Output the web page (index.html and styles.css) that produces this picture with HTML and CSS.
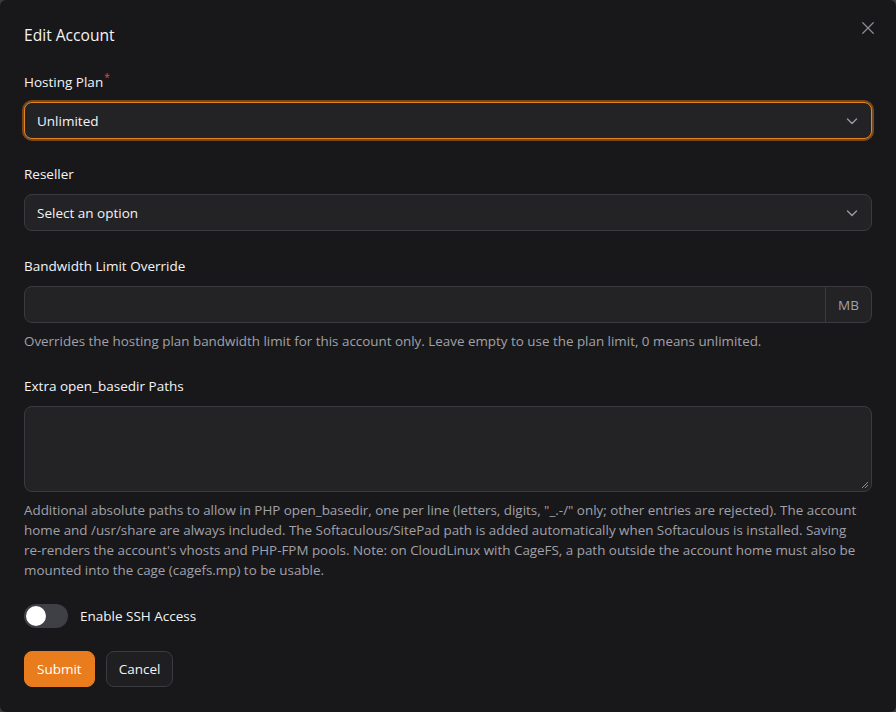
FILE: index.html
```html
<!DOCTYPE html>
<html lang="en">
<head>
<meta charset="utf-8">
<title>Edit Account</title>
<link rel="stylesheet" href="styles.css">
</head>
<body>
<div class="modal">
  <div class="header">
    <h2 class="title">Edit Account</h2>
    <button class="close" aria-label="Close">
      <svg width="18" height="18" viewBox="0 0 24 24" fill="none" stroke="currentColor" stroke-width="1.7" stroke-linecap="round"><path d="M5 5l14 14M19 5L5 19"/></svg>
    </button>
  </div>
  <form class="form">
    <div class="field">
      <label class="label">Hosting Plan<sup class="req">*</sup></label>
      <div class="select focused">
        <span>Unlimited</span>
        <svg class="chev" width="20" height="20" viewBox="0 0 20 20" fill="none" stroke="currentColor" stroke-width="1.4" stroke-linecap="round" stroke-linejoin="round"><path d="M5.5 8l4.5 4.5 4.5-4.5"/></svg>
      </div>
    </div>
    <div class="field">
      <label class="label">Reseller</label>
      <div class="select">
        <span>Select an option</span>
        <svg class="chev" width="20" height="20" viewBox="0 0 20 20" fill="none" stroke="currentColor" stroke-width="1.4" stroke-linecap="round" stroke-linejoin="round"><path d="M5.5 8l4.5 4.5 4.5-4.5"/></svg>
      </div>
    </div>
    <div class="field">
      <label class="label">Bandwidth Limit Override</label>
      <div class="input-group">
        <div class="input"></div>
        <div class="addon">MB</div>
      </div>
      <p class="help">Overrides the hosting plan bandwidth limit for this account only. Leave empty to use the plan limit, 0 means unlimited.</p>
    </div>
    <div class="field">
      <label class="label">Extra open_basedir Paths</label>
      <div class="textarea">
        <svg class="grip" width="9" height="9" viewBox="0 0 9 9" stroke="#8a8a90" stroke-width="1"><path d="M8 2L2 8M8 5L5 8"/></svg>
      </div>
      <p class="help">Additional absolute paths to allow in PHP open_basedir, one per line (letters, digits, "_.-/" only; other entries are rejected). The account home and /usr/share are always included. The Softaculous/SitePad path is added automatically when Softaculous is installed. Saving <span class="nowrap">re-renders</span> the account's vhosts and PHP-FPM pools. Note: on CloudLinux with CageFS, a path outside the account home must also be mounted into the cage (cagefs.mp) to be usable.</p>
    </div>
    <div class="toggle-row">
      <span class="toggle"><span class="knob"></span></span>
      <span class="toggle-label">Enable SSH Access</span>
    </div>
    <div class="actions">
      <button type="button" class="btn primary">Submit</button>
      <button type="button" class="btn secondary">Cancel</button>
    </div>
  </form>
</div>
</body>
</html>
```

FILE: styles.css
```css
* { box-sizing: border-box; }
html, body { margin: 0; padding: 0; }
body {
  background: #3a3a3d;
  font-family: "Open Sans", "Noto Sans", sans-serif;
  color: #f4f4f5;
  width: 896px;
  height: 712px;
  overflow: hidden;
}
.modal {
  background: #18181b;
  width: 896px;
  height: 712px;
  border-radius: 6px;
  padding: 24px 24px;
}
.header {
  display: flex;
  justify-content: space-between;
  align-items: flex-start;
}
.title {
  margin: 0;
  font-size: 15.6px;
  font-weight: 500;
  line-height: 22px;
  color: #f4f4f5;
}
.close {
  background: none;
  border: 0;
  padding: 0;
  color: #8b8b93;
  margin-top: -5px;
  margin-right: -5px;
  display: flex;
}
.form {
  margin-top: 24px;
  display: flex;
  flex-direction: column;
}
.field { margin-bottom: 23px; }
.label {
  display: block;
  font-size: 13.5px;
  font-weight: 500;
  line-height: 24px;
  color: #f4f4f5;
  margin-bottom: 8px;
}
.req { color: #ef4444; font-size: 10px; vertical-align: top; position: relative; top: -5px; margin-left: 1px; }
.select {
  height: 37px;
  border: 1px solid #3a3a3f;
  border-radius: 8px;
  background: #232326;
  display: flex;
  align-items: center;
  justify-content: space-between;
  padding: 0 9px 0 12px;
  font-size: 13.5px;
  font-weight: 500;
  color: #f4f4f5;
}
.select.focused {
  border-color: #e9831f;
  box-shadow: 0 0 0 2px rgba(233, 131, 31, 0.45);
}
.chev { color: #9a9aa3; }
.input-group {
  display: flex;
  height: 37px;
  border: 1px solid #3a3a3f;
  border-radius: 8px;
  background: #232326;
  overflow: hidden;
}
.input { flex: 1; }
.addon {
  width: 46px;
  border-left: 1px solid #3a3a3f;
  display: flex;
  align-items: center;
  justify-content: center;
  font-size: 13.5px;
  color: #a1a1aa;
}
.help {
  margin: 8px 0 0;
  font-size: 13.4px;
  line-height: 20px;
  color: #a1a1aa;
}
.nowrap { white-space: nowrap; }
.textarea {
  height: 86px;
  border: 1px solid #3a3a3f;
  border-radius: 8px;
  background: #232326;
  display: flex;
  justify-content: flex-end;
  align-items: flex-end;
  padding: 2px;
}
.toggle-row {
  display: flex;
  align-items: center;
  gap: 12px;
  margin-top: 1px;
}
.toggle {
  width: 44px;
  height: 24px;
  border-radius: 12px;
  background: #3f3f46;
  display: flex;
  align-items: center;
  padding: 2px;
}
.knob {
  width: 20px;
  height: 20px;
  border-radius: 50%;
  background: #ffffff;
}
.toggle-label { font-size: 13.5px; font-weight: 500; color: #f4f4f5; }
.actions {
  display: flex;
  gap: 11px;
  margin-top: 23px;
}
.btn {
  font-family: inherit;
  font-size: 13.5px;
  height: 36px;
  padding: 0 12px;
  border-radius: 8px;
  font-weight: 500;
}
.primary {
  background: #e97c1c;
  border: 1px solid #e97c1c;
  color: #ffffff;
}
.secondary {
  background: #1f1f22;
  border: 1px solid #3a3a3f;
  color: #f4f4f5;
}
```
